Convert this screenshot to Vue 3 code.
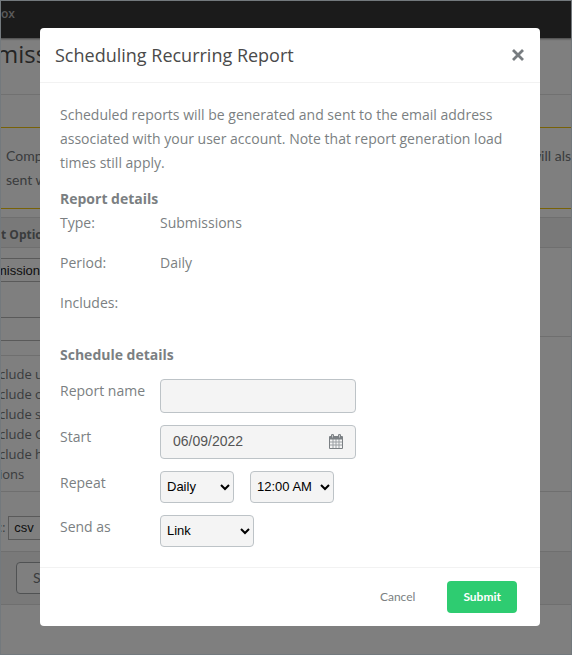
<script setup>
import { ref } from 'vue'

const notes = ['clude u', 'clude o', 'clude s', 'clude G', 'clude h', 'ions']
const reportName = ref('')
const start = ref('06/09/2022')
const repeat = ref('Daily')
const time = ref('12:00 AM')
const sendAs = ref('Link')
</script>

<template>
  <div class="page">
    <header class="topbar">ox</header>
    <h1 class="page-title">miss</h1>
    <div class="notice">
      <div class="notice-row"><span>Comp</span><span>will als</span></div>
      <div class="notice-row"><span>sent w</span></div>
    </div>
    <div class="panel-head">t Optio</div>
    <div class="columns">
      <div class="column">
        <div class="field">missions</div>
        <div class="field"></div>
      </div>
      <div class="side"></div>
    </div>
    <ul class="notes">
      <li v-for="note in notes" :key="note">{{ note }}</li>
    </ul>
    <div class="format"><span>::</span><span class="format-value">csv</span></div>
    <div class="actions"><button class="search" type="button">S</button></div>
  </div>

  <div class="overlay">
    <form class="dialog" role="dialog" aria-labelledby="dialog-title" @submit.prevent>
      <div class="dialog-head">
        <h2 id="dialog-title">Scheduling Recurring Report</h2>
        <button class="close" type="button" aria-label="Close">
          <svg viewBox="0 0 12 12" width="12" height="12"><path d="M1 1 11 11M11 1 1 11" /></svg>
        </button>
      </div>
      <div class="dialog-body">
        <p>Scheduled reports will be generated and sent to the email address associated with your user account. Note that report generation load times still apply.</p>
        <h3>Report details</h3>
        <dl>
          <dt>Type:</dt><dd>Submissions</dd>
          <dt>Period:</dt><dd>Daily</dd>
          <dt>Includes:</dt><dd></dd>
        </dl>
        <h3>Schedule details</h3>
        <div class="rows">
          <div class="row">
            <label for="name">Report name</label>
            <input id="name" v-model="reportName" class="text" type="text" />
          </div>
          <div class="row">
            <label for="start">Start</label>
            <div class="date">
              <input id="start" v-model="start" type="text" />
              <svg viewBox="0 0 14 15" width="14" height="15">
                <path class="grid" d="M4 5V14M7 5V14M10 5V14M1 8H13M1 11H13" />
                <path class="solid" fill-rule="evenodd" d="M1 2H2V1Q2 0 3.500 0T5 1V2H9V1Q9 0 10.500 0T12 1V2H13Q14 2 14 3V14Q14 15 13 15H1Q0 15 0 14V3Q0 2 1 2ZM1 5.500V14H13V5.500ZM3.200 1V3.500H3.800V1ZM10.200 1V3.500H10.800V1Z" />
              </svg>
            </div>
          </div>
          <div class="row">
            <label for="repeat">Repeat</label>
            <select id="repeat" v-model="repeat" class="short"><option>Daily</option></select>
            <select v-model="time" class="medium" aria-label="Time"><option>12:00 AM</option></select>
          </div>
          <div class="row">
            <label for="send">Send as</label>
            <select id="send" v-model="sendAs" class="long"><option>Link</option></select>
          </div>
        </div>
      </div>
      <div class="dialog-foot">
        <button class="cancel" type="button">Cancel</button>
        <button class="submit" type="submit">Submit</button>
      </div>
    </form>
  </div>
</template>

<style>
body {
  margin: 0;
  background: #fff;
}
</style>

<style scoped>
* {
  box-sizing: border-box;
}
h1, h2, h3, p, ul, dl, dd {
  margin: 0;
  padding: 0;
}
.page {
  min-height: 100vh;
  overflow: hidden;
  font: 14px/20px "Open Sans", sans-serif;
  color: #74787b;
}
.topbar {
  height: 38px;
  padding: 4px 1px;
  background: #363636;
  box-shadow: 0 1px 2px #888;
  color: #b5b5b5;
  font: 600 12px/20px "Open Sans", sans-serif;
}
.page-title {
  height: 57px;
  border-bottom: 1px solid #e2e2e2;
  color: #4a4a4a;
  font-size: 24px;
  font-weight: 400;
  line-height: 32px;
  text-indent: -4px;
}
.notice {
  margin-top: 32px;
  padding: 16px 1px 16px 6px;
  border: solid #f1c40f;
  border-width: 1px 0;
  font: 14px/24px Lato, sans-serif;
}
.notice-row {
  display: flex;
  justify-content: space-between;
}
.panel-head {
  height: 31px;
  margin-top: 8px;
  padding: 7px 1px;
  border: solid #dedede;
  border-width: 1px 0;
  background: #f2f2f2;
  font-size: 12px;
  font-weight: 700;
  line-height: 20px;
}
.columns {
  display: flex;
}
.column {
  flex: 1;
  display: grid;
  gap: 35px;
  padding: 10px 0 14px;
  border-bottom: 1px solid #dedede;
}
.field {
  height: 24px;
  border: solid #b5b5b5;
  border-width: 1px 0;
  font: 13px/23px "Liberation Sans", sans-serif;
  color: #222;
  text-indent: -4px;
}
.side {
  width: 40px;
  height: 89px;
  border-bottom: 1px solid #dedede;
}
.notes {
  padding: 8px 0 7px;
  border-bottom: 1px solid #dedede;
  font-size: 13px;
  list-style: none;
  text-indent: -1px;
}
.format {
  display: flex;
  align-items: center;
  gap: 3px;
  height: 59px;
  padding: 20px 0 7px;
  font-size: 12px;
  text-indent: -1px;
}
.format-value {
  width: 80px;
  height: 24px;
  padding: 0 6px;
  border: 1px solid #b5b5b5;
  font: 13px/22px "Liberation Sans", sans-serif;
  color: #222;
}
.actions {
  height: 54px;
  padding: 10px 16px;
  border: solid #dedede;
  border-width: 1px 0;
  background: #f2f2f2;
}
.search {
  width: 90px;
  height: 32px;
  padding: 0 16px;
  border: 1px solid #a0a4a7;
  border-radius: 4px;
  background: #fff;
  color: #74787b;
  font: 14px/30px Lato, sans-serif;
  text-align: left;
}
.overlay {
  position: fixed;
  inset: 0;
  padding: 27px 31px 27px 39px;
  overflow: auto;
  border: 1px solid #73797d;
  background: rgba(0, 0, 0, 0.5);
}
.dialog {
  border-radius: 4px;
  background: #fff;
  color: #7b7f82;
  font: 14px/24px "Open Sans", sans-serif;
}
.dialog-head {
  display: flex;
  align-items: center;
  justify-content: space-between;
  height: 55px;
  padding: 0 15px;
  border-bottom: 1px solid #f2f2f2;
}
.dialog-head h2 {
  color: #4a4a4a;
  font-size: 18px;
  font-weight: 400;
}
.close {
  display: flex;
  padding: 1px;
  border: 0;
  background: none;
}
.close path {
  fill: none;
  stroke: #777c80;
  stroke-width: 2.8;
}
.dialog-body {
  padding: 20px;
}
h3 {
  font-size: 14px;
  font-weight: 700;
}
p {
  margin-bottom: 12px;
}
dl {
  display: grid;
  grid-template-columns: 100px 1fr;
  grid-auto-rows: 24px;
  row-gap: 16px;
  margin-bottom: 28px;
}
.rows {
  display: grid;
  gap: 12px;
  margin-top: 12px;
}
.row {
  display: flex;
  align-items: flex-start;
}
label {
  width: 100px;
}
.text,
.date {
  width: 196px;
  height: 34px;
  border: 1px solid #bdc3c7;
  border-radius: 4px;
  background: #f4f4f4;
}
.text {
  padding: 0 12px;
}
.date {
  display: flex;
  align-items: center;
  padding: 0 12px 2px;
}
.date input {
  flex: 1;
  min-width: 0;
  padding: 0;
  border: 0;
  background: none;
}
.text,
.date input {
  color: #555;
  font: 14px/20px "Liberation Sans", sans-serif;
}
.solid {
  fill: #7b8084;
}
.grid {
  fill: none;
  stroke: #9a9fa3;
  stroke-width: 1;
}
select {
  height: 32px;
  padding: 0 2px 1px;
  border: 1px solid #bdc3c7;
  border-radius: 4px;
  background: #f4f4f4;
  color: #000;
  font: 13px/20px "Liberation Sans", sans-serif;
}
.short {
  width: 74px;
  margin-right: 16px;
}
.medium {
  width: 84px;
}
.long {
  width: 94px;
}
.dialog-foot {
  display: flex;
  justify-content: flex-end;
  gap: 16px;
  padding: 13px 23px;
  border-top: 1px solid #f2f2f2;
}
.dialog-foot button {
  height: 32px;
  padding: 0 16px;
  border: 0;
  border-radius: 4px;
  font: 12px/20px Lato, sans-serif;
}
.dialog-foot .cancel {
  background: none;
  color: #7b7f82;
}
.dialog-foot .submit {
  background: #2ecc71;
  color: #fff;
  font-weight: 700;
}
</style>
